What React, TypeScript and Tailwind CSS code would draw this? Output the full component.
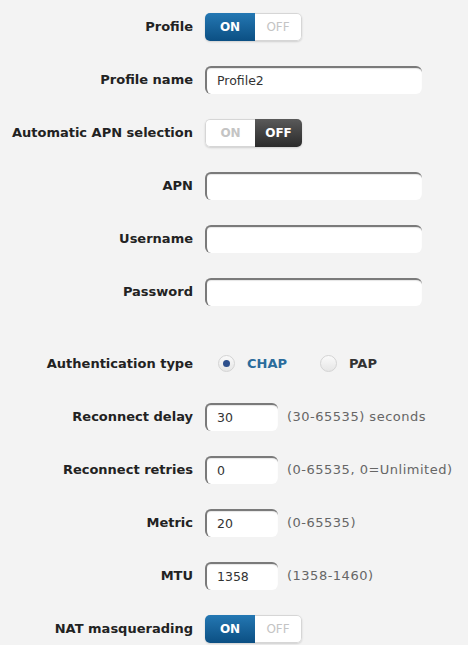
import { useState } from "react";

const labelFont = { fontFamily: "Tahoma, 'DejaVu Sans', sans-serif" };

function Toggle({ on, onChange }: { on: boolean; onChange: (v: boolean) => void }) {
  return (
    <div className="flex h-[28px] w-[97px] overflow-hidden rounded-[5px] text-[12px] font-bold shadow-[0_1px_2px_rgba(0,0,0,0.15)]">
      <button
        onClick={() => onChange(true)}
        className={`flex w-[50px] items-center justify-center ${
          on
            ? "bg-gradient-to-b from-[#2478b3] to-[#0b4f83] text-white"
            : "border border-r-0 border-[#d6d6d6] bg-white text-[#c4c4c4] rounded-l-[5px]"
        }`}
      >
        ON
      </button>
      <button
        onClick={() => onChange(false)}
        className={`flex flex-1 items-center justify-center ${
          on
            ? "border border-l-0 border-[#d6d6d6] bg-white font-normal text-[#c4c4c4] rounded-r-[5px]"
            : "bg-gradient-to-b from-[#5a5a5a] to-[#2b2b2b] text-white"
        }`}
      >
        OFF
      </button>
    </div>
  );
}

function TextBox({ value, wide }: { value: string; wide?: boolean }) {
  return (
    <input
      defaultValue={value}
      className={`h-[28px] ${
        wide ? "w-[217px]" : "w-[73px]"
      } rounded-[6px] border-t-2 border-l-2 border-[#7a7a7a] bg-white pl-[10px] text-[12.5px] text-[#333] outline-none shadow-[inset_0_1px_1px_rgba(0,0,0,0.1)]`}
      style={labelFont}
    />
  );
}

function Row({
  label,
  children,
  className = "",
}: {
  label: string;
  children: React.ReactNode;
  className?: string;
}) {
  return (
    <div className={`flex h-[53px] items-center ${className}`}>
      <label className="w-[193px] shrink-0 whitespace-nowrap text-right text-[13px] font-bold text-[#222]">
        {label}
      </label>
      <div className="ml-[12px] flex items-center">{children}</div>
    </div>
  );
}

function Hint({ children }: { children: React.ReactNode }) {
  return (
    <span className="ml-[9px] whitespace-nowrap text-[13px] tracking-[0.5px] text-[#666]">
      {children}
    </span>
  );
}

function Radio({
  checked,
  label,
  onSelect,
}: {
  checked: boolean;
  label: string;
  onSelect: () => void;
}) {
  return (
    <button onClick={onSelect} className="flex items-center">
      <span className="flex h-[17px] w-[17px] items-center justify-center rounded-full border border-[#d4d4d4] bg-gradient-to-b from-[#fafafa] to-[#e6e6e6]">
        {checked && <span className="h-[7px] w-[7px] rounded-full bg-[#2d4f8c]" />}
      </span>
      <span
        className={`ml-[12px] text-[13px] font-bold ${
          checked ? "text-[#2b6c9c]" : "text-[#333]"
        }`}
      >
        {label}
      </span>
    </button>
  );
}

export default function App() {
  const [profile, setProfile] = useState(true);
  const [autoApn, setAutoApn] = useState(false);
  const [nat, setNat] = useState(true);
  const [auth, setAuth] = useState("CHAP");

  return (
    <div className="min-h-[645px] w-[468px] bg-[#f3f3f3]" style={labelFont}>
      <Row label="Profile">
        <Toggle on={profile} onChange={setProfile} />
      </Row>
      <Row label="Profile name">
        <TextBox value="Profile2" wide />
      </Row>
      <Row label="Automatic APN selection">
        <Toggle on={autoApn} onChange={setAutoApn} />
      </Row>
      <Row label="APN">
        <TextBox value="" wide />
      </Row>
      <Row label="Username">
        <TextBox value="" wide />
      </Row>
      <Row label="Password">
        <TextBox value="" wide />
      </Row>

      <Row label="Authentication type" className="mt-[19px]">
        <div className="ml-[13px] flex items-center gap-[33px]">
          <Radio checked={auth === "CHAP"} label="CHAP" onSelect={() => setAuth("CHAP")} />
          <Radio checked={auth === "PAP"} label="PAP" onSelect={() => setAuth("PAP")} />
        </div>
      </Row>
      <Row label="Reconnect delay">
        <TextBox value="30" />
        <Hint>(30-65535) seconds</Hint>
      </Row>
      <Row label="Reconnect retries">
        <TextBox value="0" />
        <Hint>(0-65535, 0=Unlimited)</Hint>
      </Row>
      <Row label="Metric">
        <TextBox value="20" />
        <Hint>(0-65535)</Hint>
      </Row>
      <Row label="MTU">
        <TextBox value="1358" />
        <Hint>(1358-1460)</Hint>
      </Row>
      <Row label="NAT masquerading">
        <Toggle on={nat} onChange={setNat} />
      </Row>
    </div>
  );
}
